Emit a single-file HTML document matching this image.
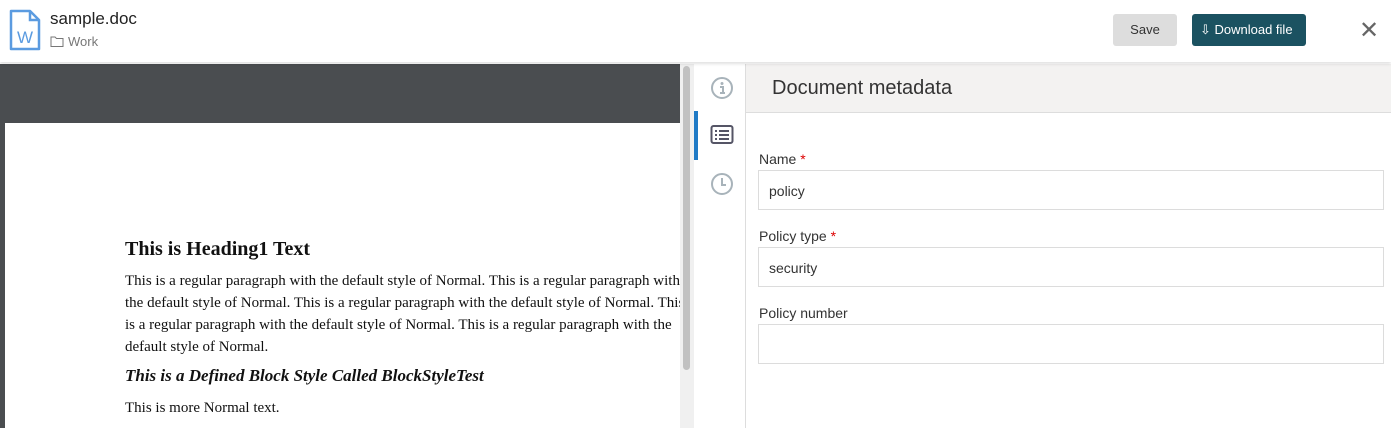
<!DOCTYPE html>
<html><head><style>
body{margin:0;width:1391px;height:428px;overflow:hidden;background:#fff;font-family:"Liberation Sans",sans-serif;position:relative}
.a{position:absolute}
.lbl{font-size:14px;color:#333}
.lbl b{color:#d00;font-weight:normal}
.inp{border:1px solid #dcdcdc;height:40px;left:758px;font-size:14px;color:#333;line-height:40px;padding-left:10px;box-sizing:border-box;width:626px}
.doc{font-family:"Liberation Serif",serif;color:#111;white-space:nowrap}
</style></head><body>
<div class="a" style="left:0;top:0;width:1391px;height:62px;background:#fff;box-shadow:0 2px 3px rgba(0,0,0,.12);z-index:2">
<svg class="a" style="left:9px;top:9px" width="32" height="42" viewBox="0 0 32 42"><path d="M2 2h19l9 9v29H2z" fill="#fff" stroke="#5b9be0" stroke-width="2.5" stroke-linejoin="round"/><path d="M21 2v9h9" fill="none" stroke="#5b9be0" stroke-width="2.5"/><text x="16" y="34" font-size="17" fill="#5b9be0" text-anchor="middle" font-family="Liberation Sans">W</text></svg>
<div class="a" style="left:50px;top:9px;font-size:17px;color:#222">sample.doc</div>
<svg class="a" style="left:50px;top:36px" width="14" height="11" viewBox="0 0 14 11"><path d="M1 1h4l1.5 1.5H13v8H1z" fill="none" stroke="#777" stroke-width="1"/></svg>
<div class="a" style="left:68px;top:34px;font-size:13px;color:#777">Work</div>
<div class="a" style="left:1113px;top:14px;width:64px;height:32px;background:#ddd;border-radius:3px;font-size:13px;color:#333;text-align:center;line-height:32px">Save</div>
<div class="a" style="left:1192px;top:14px;width:114px;height:32px;background:#1b5261;border-radius:3px;font-size:13px;color:#fff;line-height:31px"><span style="padding-left:8px">⇩ Download file</span></div>
<div class="a" style="left:1359px;top:16px;font-size:24px;color:#666">✕</div>
</div>
<div class="a" style="left:0;top:64px;width:680px;height:364px;background:#4a4d50"></div>
<div class="a" style="left:5px;top:123px;width:675px;height:305px;background:#fff;overflow:hidden">
<div class="a doc" style="left:120px;top:115px;font-size:20px;font-weight:bold">This is Heading1 Text</div>
<div class="a doc" style="left:120px;top:147px;font-size:15px;line-height:22px">This is a regular paragraph with the default style of Normal. This is a regular paragraph with<br>the default style of Normal. This is a regular paragraph with the default style of Normal. This<br>is a regular paragraph with the default style of Normal. This is a regular paragraph with the<br>default style of Normal.</div>
<div class="a doc" style="left:120px;top:243px;font-size:17px;font-weight:bold;font-style:italic">This is a Defined Block Style Called BlockStyleTest</div>
<div class="a doc" style="left:120px;top:277px;font-size:15px">This is more Normal text.</div>
</div>
<div class="a" style="left:680px;top:64px;width:14px;height:364px;background:#f0f0f0"></div>
<div class="a" style="left:683px;top:66px;width:7px;height:304px;background:#c1c1c1;border-radius:4px"></div>
<div class="a" style="left:694px;top:64px;width:51px;height:364px;border-right:1px solid #ddd;background:#fff"></div>
<div class="a" style="left:694px;top:111px;width:4px;height:49px;background:#1f7ac6"></div>
<svg class="a" style="left:710px;top:76px" width="24" height="24" viewBox="0 0 24 24"><circle cx="12" cy="12" r="10" fill="none" stroke="#a8b3ba" stroke-width="2"/><circle cx="12" cy="7.5" r="1.5" fill="#a8b3ba"/><path d="M10 11h3v6M10 17h5" stroke="#a8b3ba" stroke-width="2" fill="none"/></svg>
<svg class="a" style="left:710px;top:124px" width="24" height="22" viewBox="0 0 24 22"><rect x="1.5" y="2" width="21" height="17" rx="2" fill="none" stroke="#556" stroke-width="2"/><path d="M5 7h2M9 7h10M5 11h2M9 11h10M5 15h2M9 15h10" stroke="#556" stroke-width="2"/></svg>
<svg class="a" style="left:710px;top:172px" width="24" height="24" viewBox="0 0 24 24"><circle cx="12" cy="12" r="10" fill="none" stroke="#a8b3ba" stroke-width="2"/><path d="M12 6v7h4" stroke="#a8b3ba" stroke-width="2" fill="none"/></svg>
<div class="a" style="left:746px;top:64px;width:645px;height:48px;background:#f3f2f1;border-bottom:1px solid #ddd"></div>
<div class="a" style="left:772px;top:77px;font-size:20px;color:#333">Document metadata</div>
<div class="a lbl" style="left:759px;top:151px">Name <b>*</b></div>
<div class="a inp" style="top:170px">policy</div>
<div class="a lbl" style="left:759px;top:228px">Policy type <b>*</b></div>
<div class="a inp" style="top:247px">security</div>
<div class="a lbl" style="left:759px;top:305px">Policy number</div>
<div class="a inp" style="top:324px"></div>
</body></html>
